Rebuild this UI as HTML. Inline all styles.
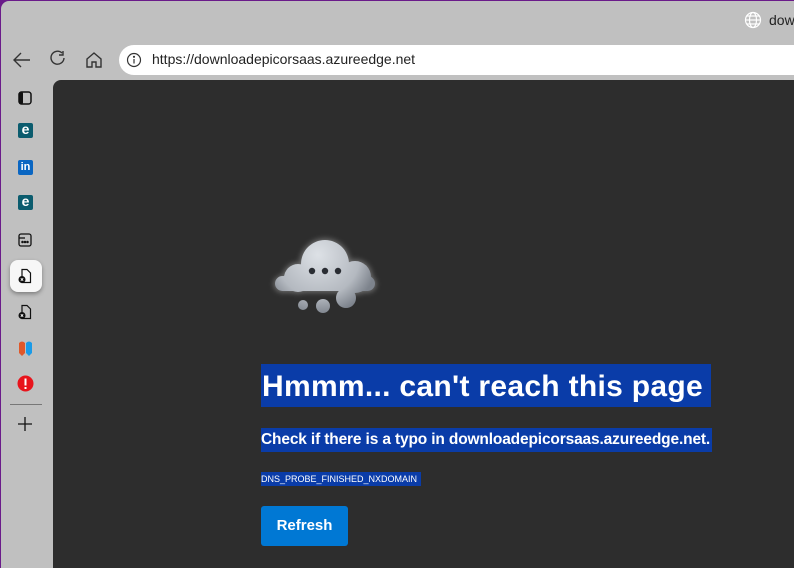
<!DOCTYPE html>
<html><head><style>
*{margin:0;padding:0;box-sizing:border-box}
body{width:794px;height:568px;overflow:hidden;background:#6a1b8a;font-family:"Liberation Sans",sans-serif;position:relative}
.frame{position:absolute;left:1px;top:1px;right:0;bottom:0;background:#c0c0c0;border-top-left-radius:8px}
.addr{position:absolute;left:119px;top:45px;width:700px;height:30px;background:#fff;border-radius:15px}
.url{position:absolute;left:152px;top:51px;font-size:14px;color:#222}
.content{position:absolute;left:53px;top:80px;right:0;bottom:0;background:#2d2d2d;border-top-left-radius:8px}
.sel{background:#0a3ca8;color:#fff;position:absolute;white-space:nowrap;overflow:hidden}
.ico{position:absolute}
</style></head><body>
<div class="frame"></div>
<svg class="ico" style="left:744px;top:11px" width="18" height="18" viewBox="0 0 18 18" fill="none" stroke="#fff" stroke-width="1.2"><circle cx="9" cy="9" r="7.5"/><ellipse cx="9" cy="9" rx="3.5" ry="7.5"/><line x1="1.5" y1="9" x2="16.5" y2="9"/><line x1="3" y1="5" x2="15" y2="5"/><line x1="3" y1="13" x2="15" y2="13"/></svg>
<div style="position:absolute;left:769px;top:12px;font-size:14px;color:#222">down</div>
<svg class="ico" style="left:12px;top:50px" width="20" height="20" viewBox="0 0 20 20" fill="none" stroke="#333" stroke-width="1.4"><path d="M18 10H3M9 3l-7 7 7 7"/></svg>
<svg class="ico" style="left:48px;top:49px" width="20" height="20" viewBox="0 0 20 20" fill="none" stroke="#333" stroke-width="1.4"><path d="M16 9a6.5 6.5 0 1 1-2-5M15 2v4h-4"/></svg>
<svg class="ico" style="left:84px;top:50px" width="20" height="20" viewBox="0 0 20 20" fill="none" stroke="#333" stroke-width="1.4"><path d="M3 9l7-6 7 6v8h-5v-5h-4v5H3z"/></svg>
<div class="addr"></div>
<svg class="ico" style="left:126px;top:52px" width="16" height="16" viewBox="0 0 16 16" fill="none" stroke="#333" stroke-width="1.2"><circle cx="8" cy="8" r="6.5"/><line x1="8" y1="7" x2="8" y2="11.5"/><circle cx="8" cy="4.8" r=".5" fill="#333"/></svg>
<div class="url">https://downloadepicorsaas.azureedge.net</div>
<svg class="ico" style="left:17px;top:90px" width="16" height="16" viewBox="0 0 16 16"><rect x="2" y="2" width="12" height="12" rx="2.5" fill="none" stroke="#111" stroke-width="1.5"/><rect x="2" y="2" width="4" height="12" rx="1.5" fill="#111"/></svg>
<div style="position:absolute;left:18px;top:123px;width:15px;height:15px;background:#0b5c6e;border-radius:2px;color:#fff;font-size:14px;font-weight:bold;line-height:13px;text-align:center">e</div>
<div style="position:absolute;left:18px;top:160px;width:15px;height:15px;background:#0a66c2;border-radius:2px;color:#fff;font-size:11px;font-weight:bold;line-height:15px;text-align:center">in</div>
<div style="position:absolute;left:18px;top:195px;width:15px;height:15px;background:#0b5c6e;border-radius:2px;color:#fff;font-size:14px;font-weight:bold;line-height:13px;text-align:center">e</div>
<svg class="ico" style="left:17px;top:232px" width="16" height="16" viewBox="0 0 16 16" fill="none" stroke="#111" stroke-width="1.3"><rect x="2" y="2" width="12" height="12" rx="2"/><line x1="2" y1="6" x2="8" y2="6"/><circle cx="5.5" cy="10" r=".6" fill="#111"/><circle cx="8" cy="10" r=".6" fill="#111"/><circle cx="10.5" cy="10" r=".6" fill="#111"/></svg>
<div style="position:absolute;left:10px;top:260px;width:32px;height:32px;background:#f7f7f7;border-radius:8px;box-shadow:0 2px 4px rgba(0,0,0,.35)"></div>
<svg class="ico" style="left:17px;top:268px" width="16" height="16" viewBox="0 0 16 16"><path d="M5 1.5h5l3.5 3.5v9.5H5z" fill="none" stroke="#111" stroke-width="1.2"/><circle cx="5" cy="11.5" r="3.5" fill="#111"/><path d="M3.8 10.3l2.4 2.4M6.2 10.3l-2.4 2.4" stroke="#fff" stroke-width=".9"/></svg>
<svg class="ico" style="left:17px;top:304px" width="16" height="16" viewBox="0 0 16 16"><path d="M5 1.5h5l3.5 3.5v9.5H5z" fill="none" stroke="#111" stroke-width="1.2"/><circle cx="5" cy="11.5" r="3.5" fill="#111"/><path d="M3.8 10.3l2.4 2.4M6.2 10.3l-2.4 2.4" stroke="#fff" stroke-width=".9"/></svg>
<svg class="ico" style="left:18px;top:339px" width="16" height="18" viewBox="0 0 16 18"><path d="M1 4q3-3 6 0v10l-3 3-3-3z" fill="#e0582a"/><path d="M8 4q3-3 6 0v10l-3 3-3-3z" fill="#1a9be8"/></svg>
<svg class="ico" style="left:17px;top:375px" width="17" height="17" viewBox="0 0 17 17"><circle cx="8.5" cy="8.5" r="8" fill="#e8141c"/><rect x="7.5" y="3.5" width="2" height="7" fill="#fff"/><rect x="7.5" y="12" width="2" height="2" fill="#fff"/></svg>
<div style="position:absolute;left:10px;top:404px;width:32px;height:1px;background:#777"></div>
<svg class="ico" style="left:17px;top:416px" width="16" height="16" viewBox="0 0 16 16" stroke="#111" stroke-width="1.3"><path d="M8 1v14M1 8h14"/></svg>
<div class="content"></div>
<svg class="ico" style="left:260px;top:225px" width="130" height="100" viewBox="260 225 130 100">
<defs><radialGradient id="g" gradientUnits="userSpaceOnUse" cx="318" cy="255" r="60"><stop offset="0" stop-color="#dde1e6"/><stop offset=".7" stop-color="#b4b9c0"/><stop offset="1" stop-color="#7d838c"/></radialGradient>
<filter id="f" x="-20%" y="-20%" width="140%" height="140%"><feGaussianBlur stdDeviation="3"/></filter></defs>
<g filter="url(#f)" fill="#fff" opacity=".35"><circle cx="325" cy="264" r="25"/><circle cx="298" cy="278" r="15"/><circle cx="355" cy="277" r="17"/><rect x="274" y="276" width="102" height="16" rx="8"/></g>
<g fill="url(#g)"><circle cx="325" cy="264" r="24"/><circle cx="298" cy="278" r="14"/><circle cx="355" cy="277" r="16"/><rect x="275" y="276" width="100" height="15" rx="7.5"/></g>
<circle cx="312" cy="271" r="3.2" fill="#2a2d33"/><circle cx="325" cy="271" r="3.2" fill="#2a2d33"/><circle cx="338" cy="271" r="3.2" fill="#2a2d33"/>
<g fill="url(#g)"><circle cx="346" cy="298" r="10"/><circle cx="323" cy="306" r="7"/><circle cx="303" cy="305" r="5"/></g>
</svg>
<div class="sel" style="left:261px;top:364px;width:450px;height:43px;font-size:30px;font-weight:bold;line-height:46px;padding-left:1px;letter-spacing:.3px">Hmmm... can't reach this page</div>
<div class="sel" style="left:261px;top:428px;width:451px;height:24px;font-size:15.5px;font-weight:bold;line-height:24px;letter-spacing:-.15px">Check if there is a typo in downloadepicorsaas.azureedge.net.</div>
<div class="sel" style="left:261px;top:472px;width:160px;height:14px;font-size:9px;line-height:14px;letter-spacing:0">DNS_PROBE_FINISHED_NXDOMAIN</div>
<div style="position:absolute;left:261px;top:506px;width:87px;height:40px;background:#0078d4;border-radius:3px;color:#fff;font-size:15px;font-weight:bold;line-height:40px;text-align:center">Refresh</div>
</body></html>
